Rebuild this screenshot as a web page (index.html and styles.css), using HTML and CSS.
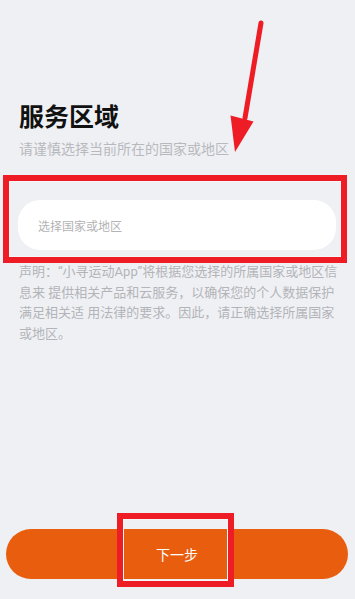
FILE: index.html
```html
<!DOCTYPE html>
<html lang="zh-CN">
<head>
  <meta charset="UTF-8">
  <meta name="viewport" content="width=device-width, initial-scale=1">
  <title>服务区域</title>
  <link rel="stylesheet" href="styles.css">
</head>
<body>
  <div class="page">
    <div class="head">
      <h1>服务区域</h1>
      <p class="sub">请谨慎选择当前所在的国家或地区</p>
    </div>

    <div class="picker">
      <span class="placeholder">选择国家或地区</span>
    </div>

    <p class="note">声明：“小寻运动App”将根据您选择的所属国家或地区信息来 提供相关产品和云服务，以确保您的个人数据保护满足相关适 用法律的要求。因此，请正确选择所属国家或地区。</p>

    <div class="spacer"></div>

    <button class="next">下一步</button>
  </div>

  <!-- annotations drawn on top of the screen -->
  <div class="mark mark-picker"></div>
  <div class="mark mark-next"></div>
  <svg class="arrow" width="355" height="599" viewBox="0 0 355 599">
    <line x1="261" y1="23" x2="245" y2="118" stroke="#ee1c25" stroke-width="5" stroke-linecap="round" />
    <polygon points="230.5,115.5 253.5,121.5 235,152" fill="#ee1c25" />
  </svg>
</body>
</html>
```

FILE: styles.css
```css
html, body {
  margin: 0;
  padding: 0;
  height: 100%;
}

body {
  background-color: #eff0f4;
  font-family: Roboto, "Noto Sans CJK SC", sans-serif;
  position: relative;
  overflow: hidden;
}

.page {
  height: 100vh;
  display: flex;
  flex-direction: column;
  box-sizing: border-box;
  padding-top: 103px;
  padding-bottom: 20px;
}

.head {
  padding-left: 19px;
}

.head h1 {
  margin: 0;
  font-size: 25px;
  line-height: 30px;
  font-weight: bold;
  color: #111;
}

.sub {
  margin: 6px 0 0;
  font-size: 14px;
  line-height: 20px;
  color: #b8b9bd;
}

.picker {
  margin: 41px 19px 0 18px;
  height: 50px;
  background-color: white;
  border-radius: 22px;
  display: flex;
  align-items: center;
  padding-left: 20px;
}

.placeholder {
  font-size: 12px;
  color: #b3b3b6;
}

.note {
  margin: 12px 17px 0 19px;
  font-size: 13px;
  line-height: 20.5px;
  color: #b3b4b8;
}

.spacer {
  flex: 1;
}

.next {
  margin: 0 7px 0 6px;
  height: 50px;
  border: none;
  border-radius: 25px;
  background-color: #e85d0e;
  color: white;
  font-family: inherit;
  font-size: 14px;
  cursor: pointer;
}

.mark {
  position: absolute;
  border: 6px solid #ee1c25;
  box-shadow: inset 0 0 0 1px #f6f6f8;
  box-sizing: border-box;
}

.mark-picker {
  left: 3px;
  top: 175px;
  width: 344px;
  height: 88px;
}

.mark-next {
  left: 117px;
  top: 513px;
  width: 117px;
  height: 74px;
}

.arrow {
  position: absolute;
  left: 0;
  top: 0;
  pointer-events: none;
}
```
